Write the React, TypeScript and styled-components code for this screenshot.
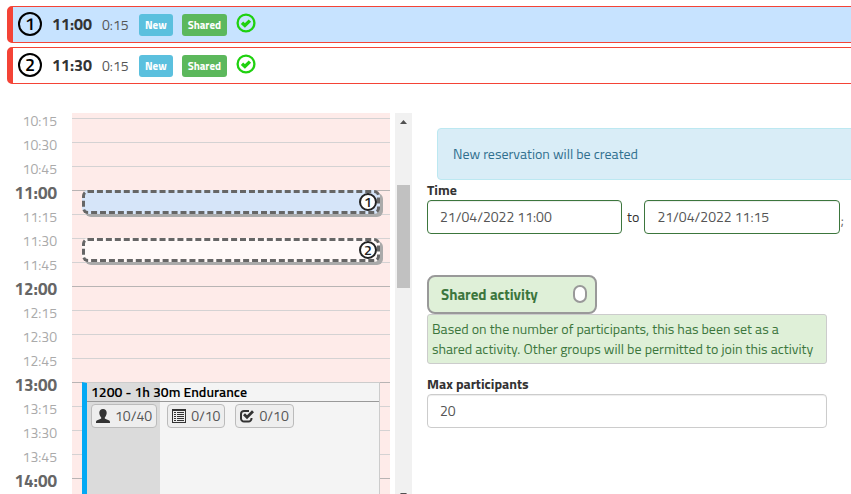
import React from 'react';
import styled, { createGlobalStyle } from 'styled-components';

const GlobalStyle = createGlobalStyle`
  *, *::before, *::after { box-sizing: border-box; }
  html, body { margin: 0; height: 100%; overflow: hidden; }
  body {
    background: #fff;
    color: #333;
    font-family: "Titillium Web", Roboto, sans-serif;
    font-size: 14px;
    line-height: 20px;
  }
  button, input { font: inherit; color: inherit; }
`;

const Page = styled.main`
  padding-top: 6px;
`;

const BookingList = styled.ul`
  list-style: none;
  margin: 0 -8px 25px 7px;
  padding: 0;
  display: flex;
  flex-direction: column;
  gap: 4px;
`;

const BookingRow = styled.li<{ $active?: boolean }>`
  display: flex;
  align-items: center;
  height: 37px;
  padding: 0 0 2px 5px;
  border: 1px solid #f44336;
  border-left-width: 6px;
  border-radius: 5px;
  background: ${(p) => (p.$active ? '#c7e3ff' : '#fff')};
`;

const NumberBadge = styled.span<{ $small?: boolean }>`
  display: flex;
  align-items: center;
  justify-content: center;
  width: ${(p) => (p.$small ? 18 : 24)}px;
  height: ${(p) => (p.$small ? 18 : 24)}px;
  border: 2px solid ${(p) => (p.$small ? '#222' : '#000')};
  border-radius: 50%;
  background: ${(p) => (p.$small ? '#fff' : 'transparent')};
  color: ${(p) => (p.$small ? '#222' : '#000')};
  font-size: ${(p) => (p.$small ? 14 : 18)}px;
  font-weight: 600;
  line-height: 1;
`;

const StartTime = styled.strong`
  margin-left: 10px;
  width: 50px;
  font-size: 16px;
`;

const Duration = styled.span`
  width: 37px;
  padding-top: 2px;
  color: #555;
`;

const Tag = styled.span<{ $color: string }>`
  margin: 3px 9px 0 0;
  height: 22px;
  padding: 0 6px;
  border-radius: 3px;
  background: ${(p) => p.$color};
  color: #fff;
  font-size: 11px;
  font-weight: 700;
  line-height: 22px;
`;

const Columns = styled.div`
  display: flex;
  align-items: flex-start;
`;

const Calendar = styled.section`
  flex: none;
  display: flex;
  height: 394px;
  padding-top: 4px;
  overflow: hidden;
`;

const Hours = styled.ol`
  list-style: none;
  margin: -4px 0 0;
  padding: 0 15px 0 0;
  width: 72px;
  text-align: right;
`;

const HourLabel = styled.li<{ $full: boolean }>`
  height: 24px;
  line-height: 24px;
  font-size: ${(p) => (p.$full ? 17 : 14)}px;
  font-weight: ${(p) => (p.$full ? 700 : 400)};
  color: ${(p) => (p.$full ? '#666' : '#aaa')};
`;

const Lane = styled.div`
  position: relative;
  width: 318px;
  margin-right: 5px;
  padding-top: 5px;
  background: #feebe9;
`;

const Slot = styled.div<{ $full: boolean }>`
  height: 24px;
  border-top: 1px solid ${(p) => (p.$full ? '#b8b4b4' : '#d4d2d3')};
`;

const DraftEvent = styled.div<{ $top: number; $active?: boolean }>`
  position: absolute;
  top: ${(p) => p.$top}px;
  left: 10px;
  right: 10px;
  height: 24px;
  display: flex;
  align-items: center;
  justify-content: flex-end;
  border: 3px dashed #666;
  border-radius: 6px;
  background: ${(p) => (p.$active ? '#d6e5f9' : '#fff9f8')};
  box-shadow: 3px 3px 0 #aaa;
`;

const Activity = styled.article`
  position: absolute;
  top: 269px;
  left: 10px;
  right: 10px;
  bottom: 0;
  border: 1px solid #ccc;
  border-left: 5px solid #03a9f4;
  border-bottom: 0;
  background: linear-gradient(to right, #dbdbdb 25%, #f4f4f4 25%);
`;

const ActivityTitle = styled.h3`
  margin: 0;
  padding-left: 4px;
  border-bottom: 1px solid #999;
  color: #000;
  font-size: 14px;
  font-weight: 600;
  line-height: 18px;
`;

const Counters = styled.div`
  display: flex;
  gap: 10px;
  padding: 2px 4px;
`;

const Counter = styled.span`
  display: flex;
  align-items: center;
  gap: 5px;
  height: 24px;
  padding: 0 4px;
  border: 1px solid #bbb;
  border-radius: 4px;
  background: #eee;
  color: #555;
`;

const ScrollTrack = styled.div`
  width: 17px;
  display: flex;
  flex-direction: column;
  align-items: center;
  justify-content: space-between;
  background: #f1f1f1;
`;

const ScrollThumb = styled.div`
  width: 13px;
  height: 103px;
  margin-bottom: 143px;
  background: #c1c1c1;
`;

const ScrollButton = styled.button`
  display: flex;
  align-items: center;
  justify-content: center;
  width: 17px;
  height: 17px;
  padding: 0;
  border: 0;
  background: transparent;
`;

const Form = styled.form`
  flex: 1;
  min-width: 0;
  padding: 19px 0 0 15px;
`;

const Notice = styled.div`
  margin: 0 -8px 0 10px;
  padding: 15px;
  border: 1px solid #bce8f1;
  border-radius: 4px;
  background: #d9edf7;
  color: #31708f;
`;

const Label = styled.label`
  display: block;
  font-weight: 700;
`;

const TimeRow = styled.div`
  display: flex;
  align-items: center;
  gap: 5px;
  margin-right: 7px;
`;

const TextInput = styled.input<{ $valid?: boolean }>`
  display: block;
  flex: 1;
  min-width: 0;
  width: 100%;
  height: 34px;
  padding: 5px 12px 7px;
  border: 1px solid ${(p) => (p.$valid ? '#3c763d' : '#ccc')};
  border-radius: 4px;
  background: #fff;
  box-shadow: inset 0 1px 1px rgba(0, 0, 0, 0.075);
  color: #555;
`;

const RowEnd = styled.span`
  align-self: flex-end;
  margin: 0 0 4px -4px;
  color: #666;
`;

const Group = styled.div<{ $gap: number }>`
  margin: ${(p) => p.$gap}px 24px 0 0;
`;

const Toggle = styled.label`
  display: flex;
  align-items: center;
  justify-content: space-between;
  width: 170px;
  height: 39px;
  padding: 0 8px 0 12px;
  border: 2px solid #999;
  border-radius: 8px;
  background: #dff0d8;
  color: #3c763d;
  font-size: 15px;
  font-weight: 700;
`;

const ToggleBox = styled.input`
  appearance: none;
  width: 14px;
  height: 18px;
  margin: 0 0 2px;
  border: 2px solid #999;
  border-radius: 7px;
  background: #fff;
  &:checked { background: #3c763d; }
`;

const Hint = styled.p`
  margin: 0;
  padding: 4px;
  border: 1px solid #ccc;
  border-radius: 3px;
  background: #dff0d8;
  color: #3c763d;
`;

const OkMark = styled.svg`
  margin-bottom: 2px;
`;

const OkIcon = () => (
  <OkMark width="20" height="20" viewBox="0 0 20 20" fill="none" stroke="#1fd10f" aria-label="Valid">
    <circle cx="10" cy="10" r="8.4" strokeWidth="2.3" />
    <path d="M6 9.7 8.9 12.500l5-4.900" strokeWidth="3.400" />
  </OkMark>
);

const UserIcon = () => (
  <svg width="14" height="14" viewBox="0 0 14 14" fill="#333" aria-hidden="true">
    <path d="M7 0c2.2 0 3.7 1.5 3.7 3.8 0 1.9-.8 3.4-1.9 4.6v1.2c1 .7 3.1 1.2 4.4 2 .6.4.8 1 .8 2.4H0c0-1.4.2-2 .8-2.4 1.3-.8 3.4-1.3 4.4-2V8.4C4.1 7.2 3.3 5.7 3.3 3.8 3.3 1.5 4.8 0 7 0z" />
  </svg>
);

const ListIcon = () => (
  <svg width="14" height="14" viewBox="0 0 14 14" fill="#333" aria-hidden="true">
    <path fillRule="evenodd" d="M0 0h14v14H0zM1 2v11h12V2z" />
    <path d="M2 3h2v1H2zM5 3h7v1H5zM2 5h2v1H2zM5 5h7v1H5zM2 7h2v1H2zM5 7h7v1H5zM2 9h2v1H2zM5 9h7v1H5zM2 11h2v1H2zM5 11h7v1H5z" />
  </svg>
);

const CheckIcon = () => (
  <svg width="14" height="14" viewBox="0 0 14 14" fill="none" stroke="#333" aria-hidden="true">
    <path d="M9 1.9H4a3 3 0 0 0-3 3v4.600a3 3 0 0 0 3 3h4.500a3 3 0 0 0 3-3V9" strokeWidth="2" />
    <path d="M4 5.300 7 8.300 13 2.200" strokeWidth="2.800" />
  </svg>
);

const Arrow = ({ down }: { down?: boolean }) => (
  <svg width="7" height="4" viewBox="0 0 7 4" fill="#505050" aria-hidden="true">
    <path d={down ? 'M0 0h7L3.5 4z' : 'M0 4h7L3.5 0z'} />
  </svg>
);

const bookings = [
  { id: 1, start: '11:00', length: '0:15', top: 77 },
  { id: 2, start: '11:30', length: '0:15', top: 125 },
];

const times = Array.from({ length: 16 }, (_, i) => {
  const minutes = 615 + i * 15;
  return `${Math.floor(minutes / 60)}:${String(minutes % 60).padStart(2, '0')}`;
});

const isFull = (time: string) => time.endsWith(':00');

export default function App() {
  return (
    <>
      <GlobalStyle />
      <Page>
        <BookingList>
          {bookings.map((b) => (
            <BookingRow key={b.id} $active={b.id === 1}>
              <NumberBadge>{b.id}</NumberBadge>
              <StartTime>{b.start}</StartTime>
              <Duration>{b.length}</Duration>
              <Tag $color="#5bc0de">New</Tag>
              <Tag $color="#5cb85c">Shared</Tag>
              <OkIcon />
            </BookingRow>
          ))}
        </BookingList>
        <Columns>
          <Calendar>
            <Hours>
              {times.map((t) => (
                <HourLabel key={t} $full={isFull(t)}>{t}</HourLabel>
              ))}
            </Hours>
            <Lane>
              {times.map((t) => (
                <Slot key={t} $full={isFull(t)} />
              ))}
              {bookings.map((b) => (
                <DraftEvent key={b.id} $top={b.top} $active={b.id === 1}>
                  <NumberBadge $small>{b.id}</NumberBadge>
                </DraftEvent>
              ))}
              <Activity>
                <ActivityTitle>1200 - 1h 30m Endurance</ActivityTitle>
                <Counters>
                  <Counter><UserIcon />10/40</Counter>
                  <Counter><ListIcon />0/10</Counter>
                  <Counter><CheckIcon />0/10</Counter>
                </Counters>
              </Activity>
            </Lane>
            <ScrollTrack>
              <ScrollButton type="button" aria-label="Scroll up"><Arrow /></ScrollButton>
              <ScrollThumb />
              <ScrollButton type="button" aria-label="Scroll down"><Arrow down /></ScrollButton>
            </ScrollTrack>
          </Calendar>
          <Form>
            <Notice role="status">New reservation will be created</Notice>
            <Label htmlFor="start">Time</Label>
            <TimeRow>
              <TextInput id="start" $valid defaultValue="21/04/2022 11:00" />
              <label htmlFor="end">to</label>
              <TextInput id="end" $valid defaultValue="21/04/2022 11:15" />
              <RowEnd>;</RowEnd>
            </TimeRow>
            <Group $gap={41}>
              <Toggle>
                Shared activity
                <ToggleBox type="checkbox" />
              </Toggle>
              <Hint>
                Based on the number of participants, this has been set as a shared activity. Other
                groups will be permitted to join this activity
              </Hint>
            </Group>
            <Group $gap={10}>
              <Label htmlFor="max">Max participants</Label>
              <TextInput id="max" inputMode="numeric" defaultValue="20" />
            </Group>
          </Form>
        </Columns>
      </Page>
    </>
  );
}
